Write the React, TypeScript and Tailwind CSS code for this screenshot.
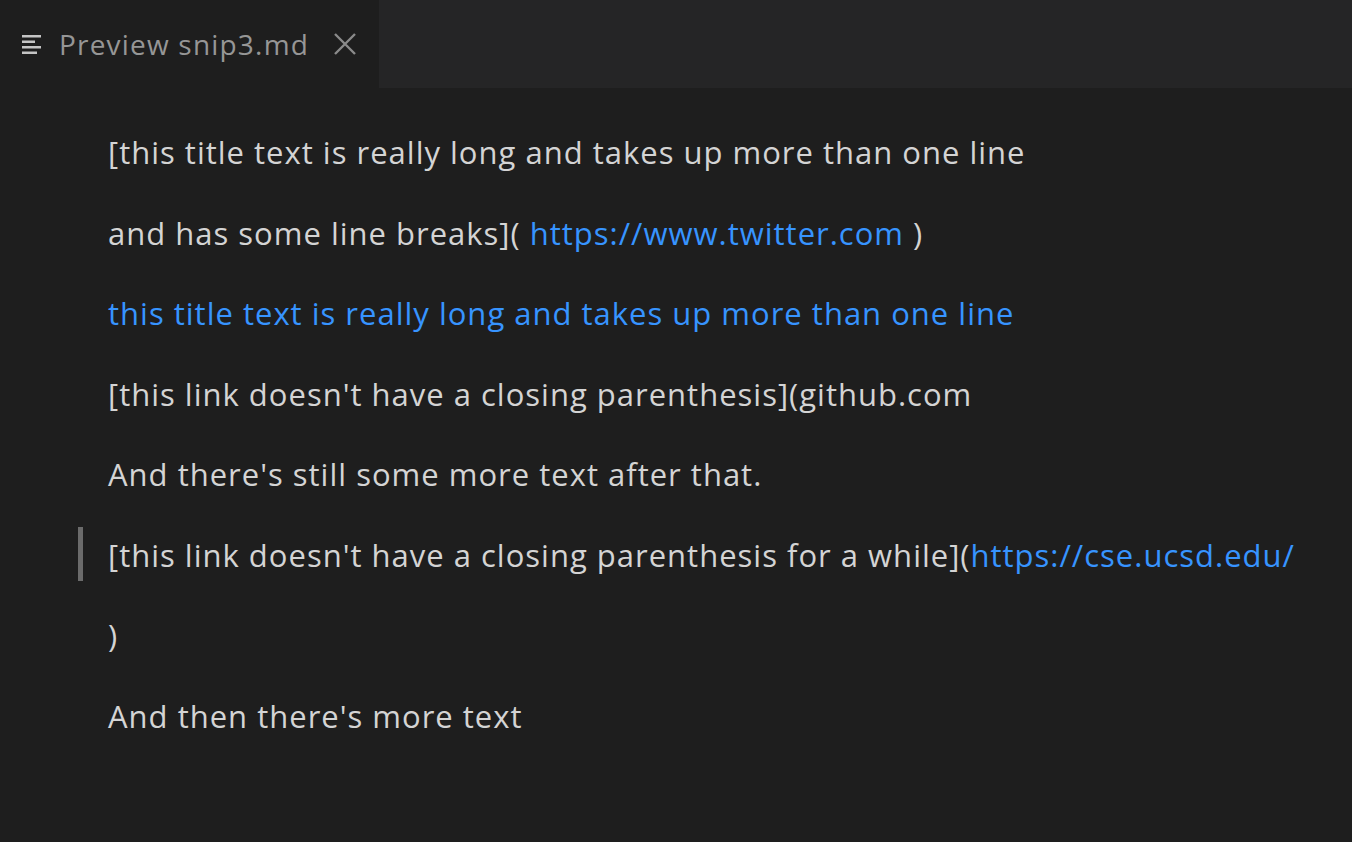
import React from "react";

const Line = ({ children, bar }: { children: React.ReactNode; bar?: boolean }) => (
  <div className="relative h-[80.5px] flex items-center whitespace-nowrap">
    {bar && <div className="absolute left-[-30px] top-[12px] w-[5px] h-[54px] bg-[#6b6b6b]" />}
    <span>{children}</span>
  </div>
);

const L = ({ children }: { children: React.ReactNode }) => (
  <span className="text-[#3794ff]">{children}</span>
);

export default function App() {
  return (
    <div className="w-[1352px] h-[842px] bg-[#1e1e1e] overflow-hidden" style={{ fontFamily: '"Open Sans", sans-serif' }}>
      <div className="flex h-[88px] bg-[#252526]">
        <div className="w-[379px] h-full bg-[#1e1e1e] flex items-center">
          <svg className="ml-[22px]" width="21" height="22" viewBox="0 0 21 22">
            <rect x="0" y="2" width="19" height="2.5" fill="#c5c5c5" />
            <rect x="0" y="7.5" width="13" height="2.5" fill="#c5c5c5" />
            <rect x="0" y="13" width="19" height="2.5" fill="#c5c5c5" />
            <rect x="0" y="18.5" width="15" height="2.5" fill="#c5c5c5" />
          </svg>
          <span className="ml-[16px] text-[28px] text-[#969696] tracking-[1.2px]">Preview snip3.md</span>
          <svg className="ml-[24px]" width="24" height="24" viewBox="0 0 24 24">
            <path d="M2 2 L22 22 M22 2 L2 22" stroke="#8a8a8a" strokeWidth="2.4" />
          </svg>
        </div>
      </div>
      <div className="pl-[108px] pt-[24px] text-[31px] text-[#d4d4d4] tracking-[1px]">
        <Line>[this title text is really long and takes up more than one line</Line>
        <Line>and has some line breaks]( <L>https://www.twitter.com</L> )</Line>
        <Line><L>this title text is really long and takes up more than one line</L></Line>
        <Line>[this link doesn't have a closing parenthesis](github.com</Line>
        <Line>And there's still some more text after that.</Line>
        <Line bar>[this link doesn't have a closing parenthesis for a while](<L>https://cse.ucsd.edu/</L></Line>
        <Line>)</Line>
        <Line>And then there's more text</Line>
      </div>
    </div>
  );
}
